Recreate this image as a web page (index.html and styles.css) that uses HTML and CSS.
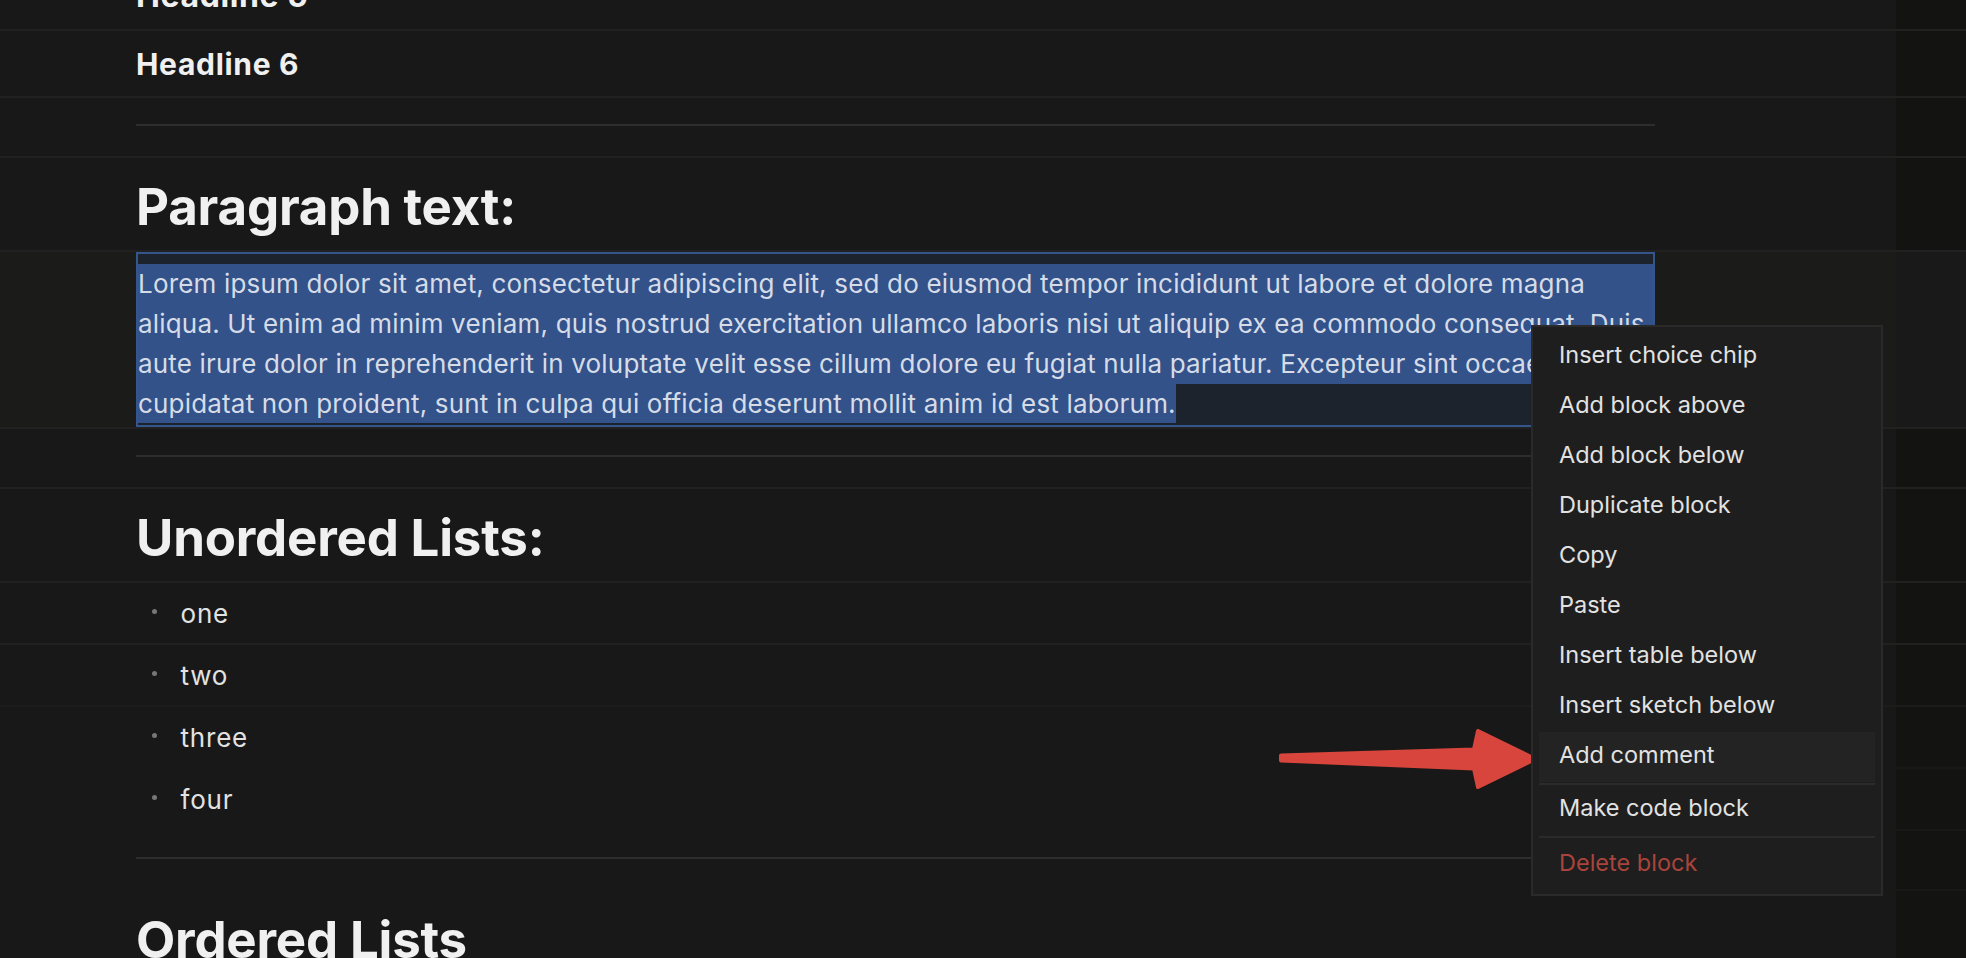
FILE: index.html
```html
<!DOCTYPE html>
<html lang="en">
<head>
<meta charset="utf-8">
<title>Editor</title>
<link rel="stylesheet" href="styles.css">
</head>
<body>
<div class="app">
  <div class="editor">
    <div class="row"><div class="cell"><h5 class="h5">Headline 5</h5></div><div class="gutter"></div></div>
    <div class="row"><div class="cell"><h6 class="h6">Headline 6</h6></div><div class="gutter"></div></div>
    <div class="row"><div class="cell rule-cell"><div class="rule"></div></div><div class="gutter"></div></div>
    <div class="row"><div class="cell"><h2 class="h2">Paragraph text:</h2></div><div class="gutter"></div></div>
    <div class="row row-active">
      <div class="cell">
        <div class="para-box">
          <p class="para"><span class="sel-lines">Lorem ipsum dolor sit amet, consectetur adipiscing elit, sed do eiusmod tempor incididunt ut labore et dolore magna<br>aliqua. Ut enim ad minim veniam, quis nostrud exercitation ullamco laboris nisi ut aliquip ex ea commodo consequat. Duis<br>aute irure dolor in reprehenderit in voluptate velit esse cillum dolore eu fugiat nulla pariatur. Excepteur sint occaecat<br></span><span class="sel-last">cupidatat non proident, sunt in culpa qui officia deserunt mollit anim id est laborum.</span></p>
        </div>
      </div>
      <div class="gutter"></div>
    </div>
    <div class="row"><div class="cell rule-cell"><div class="rule"></div></div><div class="gutter"></div></div>
    <div class="row"><div class="cell"><h2 class="h2">Unordered Lists:</h2></div><div class="gutter"></div></div>
    <div class="row"><div class="cell"><div class="li"><span class="dot"></span><span>one</span></div></div><div class="gutter"></div></div>
    <div class="row row-faint"><div class="cell"><div class="li"><span class="dot"></span><span>two</span></div></div><div class="gutter"></div></div>
    <div class="row row-plain"><div class="cell"><div class="li"><span class="dot"></span><span>three</span></div></div><div class="gutter"></div></div>
    <div class="row row-plain"><div class="cell"><div class="li"><span class="dot"></span><span>four</span></div></div><div class="gutter"></div></div>
    <div class="row row-plain"><div class="cell rule-cell"><div class="rule"></div></div><div class="gutter"></div></div>
    <div class="row row-plain"><div class="cell"><h2 class="h2">Ordered Lists</h2></div><div class="gutter"></div></div>
  </div>

  <svg class="arrow" width="280" height="80" viewBox="0 0 280 80" aria-hidden="true">
    <path d="M11 35.5 L204 29.5 L208 11 L265 39 L208 67 L204 48.5 L11 40.5 Z" fill="#d8453d" stroke="#d8453d" stroke-width="4" stroke-linejoin="round"/>
  </svg>

  <div class="menu">
    <div class="menu-item">Insert choice chip</div>
    <div class="menu-item">Add block above</div>
    <div class="menu-item">Add block below</div>
    <div class="menu-item">Duplicate block</div>
    <div class="menu-item">Copy</div>
    <div class="menu-item">Paste</div>
    <div class="menu-item">Insert table below</div>
    <div class="menu-item">Insert sketch below</div>
    <div class="menu-item is-hover">Add comment</div>
    <div class="menu-sep"></div>
    <div class="menu-item">Make code block</div>
    <div class="menu-sep"></div>
    <div class="menu-item is-danger">Delete block</div>
  </div>
</div>
</body>
</html>
```

FILE: styles.css
```css
html, body {
  margin: 0;
  padding: 0;
  background: #181818;
  height: 100%;
  overflow: hidden;
}

body {
  font-family: Inter, "Noto Sans", "Liberation Sans", sans-serif;
  color: #e2e2e2;
}

.app {
  position: relative;
  width: 1966px;
  height: 958px;
  overflow: hidden;
  background: #181818;
}

.editor {
  margin-top: -38px;
}

.row {
  display: grid;
  grid-template-columns: 1fr 70px;
  border-bottom: 2px solid #212121;
}

.row-faint {
  border-bottom-color: #1c1c1c;
}

.row-plain {
  border-bottom-color: transparent;
}

.row-active {
  background: #1b1b1a;
}

.cell {
  padding: 0 241px 0 136px;
  min-width: 0;
}

.gutter {
  background: #131312;
}

.row-active .gutter {
  background: #191919;
}

.h5, .h6, .h2 {
  margin: 0;
  font-weight: 700;
  color: #f0f0f0;
}

.h5 {
  font-size: 32px;
  line-height: 38px;
  padding: 15px 0 14px;
  letter-spacing: 0.6px;
}

.h6 {
  font-size: 30px;
  line-height: 36px;
  padding: 15px 0 14px;
  letter-spacing: 0.7px;
}

.h2 {
  font-size: 51px;
  line-height: 60px;
  padding: 19px 0 13px;
  letter-spacing: -0.2px;
}

.rule-cell {
  padding-top: 26px;
  padding-bottom: 30px;
}

.rule {
  height: 2px;
  background: #2d2d2d;
}

.para-box {
  border: 2px solid #35558d;
  background: #1d232d;
  padding: 10px 0 1px;
}

.para {
  margin: 0;
  font-size: 26px;
  line-height: 40px;
  letter-spacing: 0.18px;
  white-space: nowrap;
  overflow: hidden;
  color: #d6dce7;
  background: linear-gradient(#33528a, #33528a) top left / 100% 120px no-repeat;
}

.sel-last {
  background: #33528a;
  padding: 4.3px 0;
}

.li {
  display: flex;
  align-items: center;
  font-size: 26px;
  line-height: 40px;
  letter-spacing: 0.8px;
  padding: 11px 0 9px;
  color: #e2e2e2;
}

.dot {
  width: 5px;
  height: 5px;
  border-radius: 50%;
  background: #777777;
  margin: 0 24px 5px 15.5px;
  flex: none;
}

.arrow {
  position: absolute;
  left: 1270px;
  top: 720px;
}

.menu {
  position: absolute;
  left: 1531px;
  top: 325px;
  width: 336px;
  border: 2px solid #2a2a2a;
  background: #1e1e1e;
  padding: 5px 6px 6px;
}

.menu-item {
  font-size: 23.5px;
  line-height: 30px;
  padding: 8px 20px 12px;
  color: #e2e2e2;
  white-space: nowrap;
}

.menu-item.is-hover {
  background: #232323;
}

.menu-item.is-danger {
  color: #a9443c;
  padding-top: 10px;
  padding-bottom: 10px;
}

.menu-sep {
  height: 2px;
  margin-top: 1px;
  background: #2b2b2b;
}
```
